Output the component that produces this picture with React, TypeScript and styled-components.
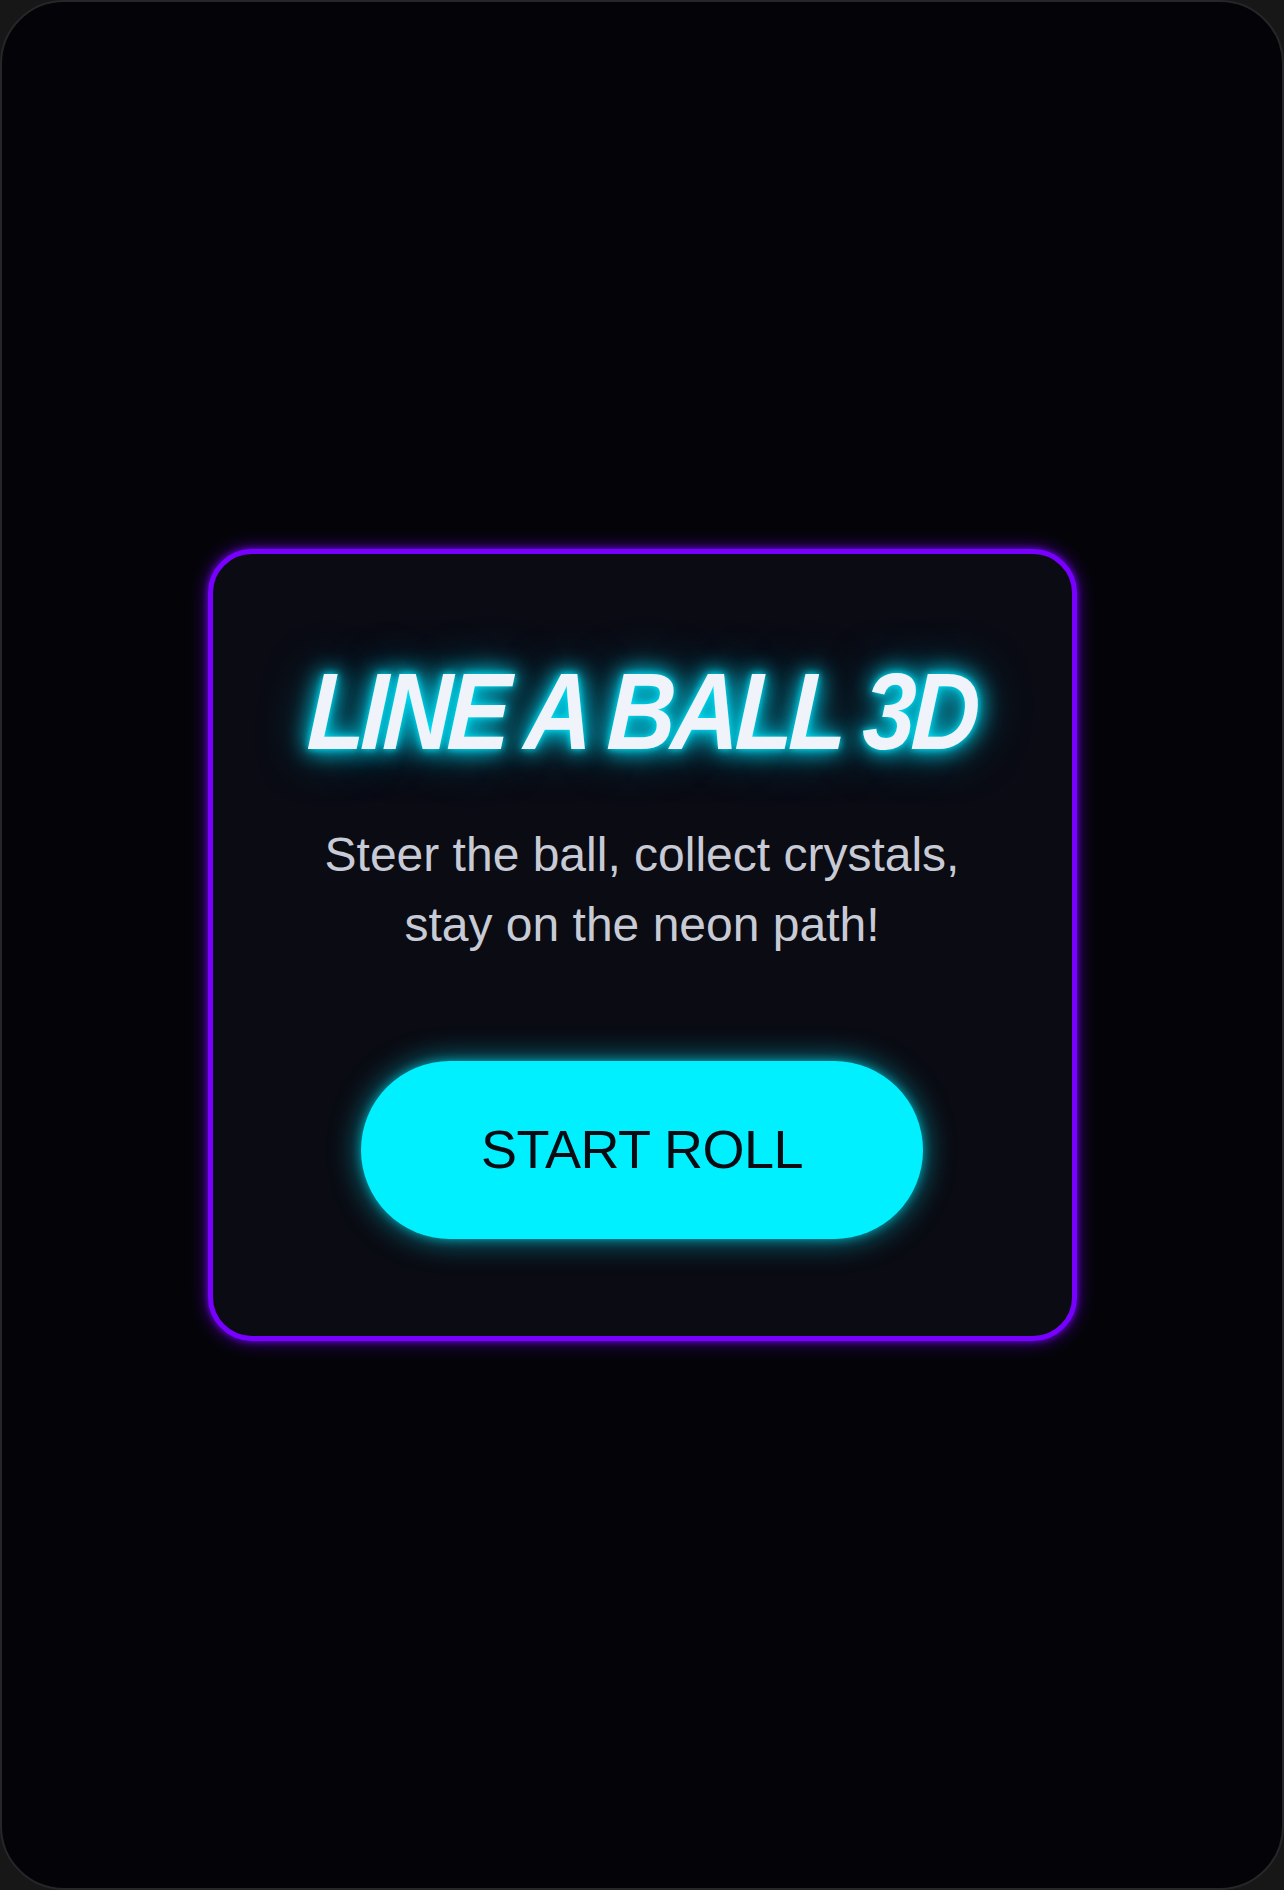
import styled, { createGlobalStyle } from "styled-components";

const GlobalStyle = createGlobalStyle`
  html, body {
    margin: 0;
    padding: 0;
    background: #171717;
  }
  * {
    box-sizing: border-box;
  }
`

const Screen = styled.div`
  width: 1284px;
  height: 1890px;
  border-radius: 64px;
  border: 2px solid #262628;
  background: #040408;
  display: flex;
  align-items: center;
  justify-content: center;
  overflow: hidden;
`

const Card = styled.div`
  width: 869px;
  padding: 92px 80px 97px;
  border: 5px solid #7800ff;
  border-radius: 44px;
  background: #0a0b13;
  box-shadow: 0 0 18px rgba(120, 0, 255, 0.65), 0 0 6px rgba(120, 0, 255, 0.8);
  display: flex;
  flex-direction: column;
  align-items: center;
`

// condensed logo look: the narrow cut of the face isn't installed, so squeeze it
const Title = styled.h1`
  margin: 0;
  font-family: "Liberation Sans", Arial, sans-serif;
  font-size: 109px;
  font-weight: 700;
  font-style: italic;
  line-height: 1.2;
  letter-spacing: -5px;
  color: #f0f4fa;
  white-space: nowrap;
  transform: scaleX(0.87) skewX(-3deg);
  text-shadow:
    0 0 8px rgba(0, 235, 255, 0.95),
    0 0 22px rgba(0, 225, 250, 0.9),
    0 0 30px rgba(0, 215, 245, 0.7),
    0 0 52px rgba(0, 200, 235, 0.55);
`

const Tagline = styled.p`
  margin: 43px 0 0;
  max-width: 690px;
  font-family: "Liberation Sans", Arial, sans-serif;
  font-size: 48px;
  line-height: 70px;
  text-align: center;
  color: #c8cbd6;
`

const StartButton = styled.button`
  margin-top: 101px;
  width: 562px;
  height: 178px;
  padding: 0 0 2px;
  border: none;
  border-radius: 89px;
  background: #00f0ff;
  color: #0a0b13;
  font-family: "Liberation Sans", Arial, sans-serif;
  font-size: 54px;
  letter-spacing: -0.5px;
  display: flex;
  align-items: center;
  justify-content: center;
  box-shadow: 0 0 30px rgba(0, 235, 255, 0.6), 0 0 10px rgba(0, 235, 255, 0.5);
  cursor: pointer;
`

export default function App() {
  return (
    <>
      <GlobalStyle />
      <Screen>
        <Card>
          <Title>LINE A BALL 3D</Title>
          <Tagline>Steer the ball, collect crystals, stay on the neon path!</Tagline>
          <StartButton>START ROLL</StartButton>
        </Card>
      </Screen>
    </>
  )
}
